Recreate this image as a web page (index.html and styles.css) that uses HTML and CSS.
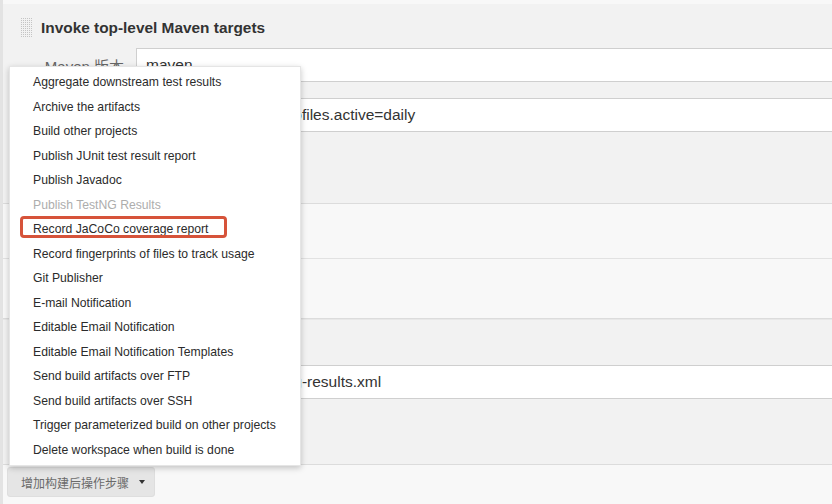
FILE: index.html
```html
<!DOCTYPE html>
<html lang="zh">
<head>
<meta charset="utf-8">
<title>Post-build actions</title>
<link rel="stylesheet" href="styles.css">
</head>
<body>
<div class="page">
  <div class="rail">
    <div class="top-gap"></div>
    <section class="step step-maven">
      <div class="step-head">
        <svg class="handle" width="12" height="20" viewBox="0 0 12 20" aria-hidden="true">
          <defs>
            <pattern id="dots" width="2" height="2" patternUnits="userSpaceOnUse">
              <rect x="0" y="0" width="1" height="1" fill="#c4c4c4"/>
            </pattern>
          </defs>
          <rect x="0" y="0" width="12" height="20" fill="url(#dots)"/>
        </svg>
        <h3 class="step-title">Invoke top-level Maven targets</h3>
      </div>
      <div class="field field-gap">
        <label class="field-label">Maven 版本</label>
        <div class="input">maven</div>
      </div>
      <div class="field">
        <span class="field-label"></span>
        <div class="input">clean test -Dspring.profiles.active=daily</div>
      </div>
    </section>
    <div class="plain plain-a"></div>
    <div class="plain plain-b"></div>
    <section class="step step-report">
      <div class="field">
        <span class="field-label"></span>
        <div class="input">/surefire-reports/testng-results.xml</div>
      </div>
    </section>
    <div class="footer">
      <button class="add-btn" type="button">增加构建后操作步骤<span class="caret"></span></button>
    </div>
  </div>

  <ul class="menu">
    <li class="menu-item">Aggregate downstream test results</li>
    <li class="menu-item">Archive the artifacts</li>
    <li class="menu-item">Build other projects</li>
    <li class="menu-item">Publish JUnit test result report</li>
    <li class="menu-item">Publish Javadoc</li>
    <li class="menu-item is-disabled">Publish TestNG Results</li>
    <li class="menu-item is-marked">Record JaCoCo coverage report<span class="mark"></span></li>
    <li class="menu-item">Record fingerprints of files to track usage</li>
    <li class="menu-item">Git Publisher</li>
    <li class="menu-item">E-mail Notification</li>
    <li class="menu-item">Editable Email Notification</li>
    <li class="menu-item">Editable Email Notification Templates</li>
    <li class="menu-item">Send build artifacts over FTP</li>
    <li class="menu-item">Send build artifacts over SSH</li>
    <li class="menu-item">Trigger parameterized build on other projects</li>
    <li class="menu-item">Delete workspace when build is done</li>
  </ul>
</div>
</body>
</html>
```

FILE: styles.css
```css
html, body {
  margin: 0;
  padding: 0;
}

body {
  width: 832px;
  height: 504px;
  overflow: hidden;
  background: #f8f8f8;
  font-family: "Liberation Sans", Arial, Helvetica, sans-serif;
  color: #333;
}

.page {
  position: relative;
  width: 832px;
  height: 504px;
  overflow: hidden;
}

.rail {
  border-left: 3px solid #e3e3e3;
}

.top-gap {
  height: 4px;
  background: #f8f8f8;
}

.step {
  background: #f2f2f2;
}

.step-maven {
  padding-bottom: 71px;
  border-bottom: 1px solid #dcdcdc;
}

.step-head {
  height: 44px;
  box-sizing: border-box;
  padding-top: 4px;
  display: flex;
  align-items: center;
}

.handle {
  display: block;
  margin-left: 18px;
  margin-right: 8px;
}

.step-title {
  margin: 0;
  font-size: 15.4px;
  font-weight: bold;
  color: #333;
  line-height: 20px;
}

.field {
  display: flex;
  align-items: center;
}

.field-gap {
  margin-bottom: 16px;
}

.field-label {
  width: 121px;
  flex: none;
  text-align: right;
  font-size: 15px;
  color: #666;
  margin-right: 12px;
  font-family: "Liberation Sans", "Noto Sans CJK SC", sans-serif;
}

.input {
  flex: 1;
  height: 34px;
  box-sizing: border-box;
  margin-right: -4px;
  background: #fff;
  border: 1px solid #cfcfcf;
  padding: 0 9px;
  font-size: 15.5px;
  line-height: 32px;
  color: #333;
  white-space: nowrap;
  overflow: hidden;
}

.plain {
  background: #f8f8f8;
}

.plain-a {
  height: 54px;
  border-bottom: 1px solid #e2e2e2;
}

.plain-b {
  height: 59px;
  border-bottom: 1px solid #dcdcdc;
}

.step-report {
  border-top: 1px solid #e8e8e8;
  padding-top: 45px;
  padding-bottom: 65px;
  border-bottom: 1px solid #dcdcdc;
}

.footer {
  padding-top: 2px;
  padding-bottom: 7px;
}

.add-btn {
  display: flex;
  align-items: center;
  margin-left: 4px;
  width: 148px;
  height: 30px;
  box-sizing: border-box;
  padding: 0 0 0 13px;
  border: 1px solid #dedede;
  border-radius: 3px;
  background: #e5e5e5;
  color: #6a6a6a;
  font-family: "Noto Sans CJK SC", sans-serif;
  font-size: 12px;
  cursor: pointer;
}

.caret {
  display: inline-block;
  width: 0;
  height: 0;
  margin-left: 10px;
  border-left: 3.5px solid transparent;
  border-right: 3.5px solid transparent;
  border-top: 4px solid #333;
}

.menu {
  position: absolute;
  left: 9px;
  top: 66px;
  width: 292px;
  height: 400px;
  box-sizing: border-box;
  margin: 0;
  padding: 3px 0;
  list-style: none;
  background: #fff;
  border: 1px solid rgba(0, 0, 0, 0.1);
  box-shadow: 0 2px 6px rgba(0, 0, 0, 0.22);
  z-index: 10;
}

.menu-item {
  position: relative;
  height: 24.5px;
  line-height: 24.5px;
  padding-left: 23px;
  font-size: 12.2px;
  color: #2b2b2b;
  white-space: nowrap;
}

.menu-item.is-disabled {
  color: #adadad;
}

.mark {
  position: absolute;
  left: 10px;
  top: -1px;
  width: 207px;
  height: 22px;
  box-sizing: border-box;
  border: 3px solid #d6533a;
  border-radius: 4px;
}
```
